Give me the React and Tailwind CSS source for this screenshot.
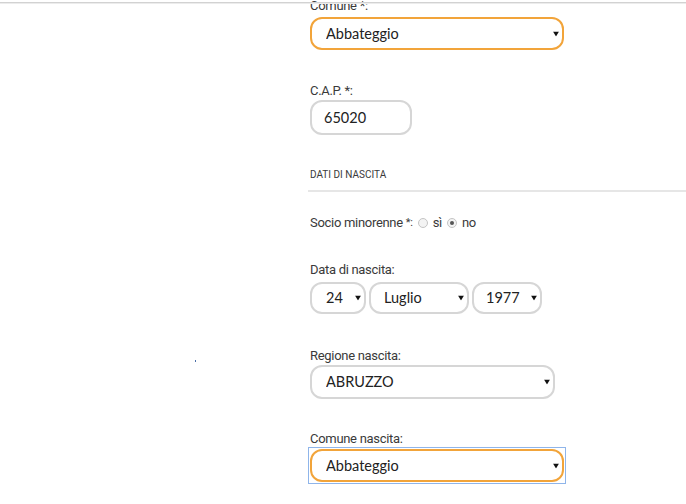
import React, { useState } from 'react';

const labelCls = "block font-['Roboto',sans-serif] text-[13px] leading-[16px] tracking-[-0.3px] text-[#3a3a3a]";
const valueFont = "font-['Lato',sans-serif] text-[14.5px] text-[#222]";

const Arrow = () => (
    <svg className="pointer-events-none absolute right-[5px] top-1/2 -translate-y-1/2" width="6" height="5" viewBox="0 0 6 5">
        <path d="M0 0h6L3 5z" fill="#111" />
    </svg>
);

const Select = ({ value, options, onChange, wrap, box }) => (
    <div className={`relative ${wrap}`}>
        <select
            value={value}
            onChange={(e) => onChange(e.target.value)}
            className={`h-full w-full appearance-none bg-white outline-none ${valueFont} ${box}`}
        >
            {options.map((o) => <option key={o}>{o}</option>)}
        </select>
        <Arrow />
    </div>
);

const App = () => {
    const [form, setForm] = useState({
        comune: 'Abbateggio',
        cap: '65020',
        minorenne: 'no',
        giorno: '24',
        mese: 'Luglio',
        anno: '1977',
        regione: 'ABRUZZO',
        comuneNascita: 'Abbateggio',
    });
    const set = (key) => (v) => setForm((f) => ({ ...f, [key]: v }));

    return (
        <div className="relative h-[504px] w-[686px] overflow-hidden bg-white">
            {/* top edge of the scrolled panel */}
            <div className="absolute left-0 right-0 top-[2px] z-10 h-[1px] bg-[#d2d2d2]" />
            <div className="absolute left-0 right-0 top-[3px] z-10 h-[1px] bg-[#ececec]" />
            <div className="absolute left-[195px] top-[360px] h-[2px] w-[1px] bg-[#4a6fa8]" />

            <div className="-mt-[2px] pl-[310px]">
                <label className={labelCls}>Comune *:</label>
                <Select
                    value={form.comune}
                    options={['Abbateggio', 'Pescara', 'Chieti']}
                    onChange={set('comune')}
                    wrap="mt-[3px] h-[33px] w-[254px]"
                    box="rounded-[12px] border-2 border-[#f2a43a] pl-[14px]"
                />

                <label className={`${labelCls} mt-[33px]`}>C.A.P. *:</label>
                <input
                    value={form.cap}
                    onChange={(e) => set('cap')(e.target.value)}
                    className={`mt-[1px] block h-[35px] w-[102px] rounded-[12px] border-2 border-[#d6d6d6] pl-[12px] outline-none ${valueFont}`}
                />

                <div className="mt-[33px] font-['Roboto',sans-serif] text-[10px] leading-[13px] text-[#3a3a3a]">DATI DI NASCITA</div>
                <div className="-ml-[2px] mt-[9px] h-[2px] bg-[#e6e6e6]" />

                <div className="mt-[23px] flex items-center font-['Roboto',sans-serif] text-[13px] leading-[16px] tracking-[-0.3px] text-[#3a3a3a]">
                    <span>Socio minorenne</span>
                    <span className="ml-[3px] text-[11px]">*:</span>
                    {[['si', 'sì'], ['no', 'no']].map(([k, t]) => (
                        <label key={k} className="ml-[5px] flex cursor-pointer items-center" onClick={() => set('minorenne')(k)}>
                            <span className="flex h-[10px] w-[10px] items-center justify-center rounded-full border border-[#c4c4c4] bg-[#f3f3f3]">
                                {form.minorenne === k && <span className="h-[4px] w-[4px] rounded-full bg-[#555]" />}
                            </span>
                            <span className="ml-[5px]">{t}</span>
                        </label>
                    ))}
                </div>

                <label className={`${labelCls} mt-[31px]`}>Data di nascita:</label>
                <div className="mt-[4px] flex gap-[3px]">
                    <Select
                        value={form.giorno}
                        options={Array.from({ length: 31 }, (_, i) => String(i + 1))}
                        onChange={set('giorno')}
                        wrap="h-[32px] w-[56px]"
                        box="rounded-[12px] border-2 border-[#d6d6d6] pl-[14px]"
                    />
                    <Select
                        value={form.mese}
                        options={['Gennaio', 'Febbraio', 'Marzo', 'Aprile', 'Maggio', 'Giugno', 'Luglio', 'Agosto', 'Settembre', 'Ottobre', 'Novembre', 'Dicembre']}
                        onChange={set('mese')}
                        wrap="h-[32px] w-[100px]"
                        box="rounded-[12px] border-2 border-[#d6d6d6] pl-[13px]"
                    />
                    <Select
                        value={form.anno}
                        options={Array.from({ length: 60 }, (_, i) => String(1950 + i))}
                        onChange={set('anno')}
                        wrap="h-[32px] w-[70px]"
                        box="rounded-[12px] border-2 border-[#d6d6d6] pl-[12px]"
                    />
                </div>

                <label className={`${labelCls} mt-[34px]`}>Regione nascita:</label>
                <Select
                    value={form.regione}
                    options={['ABRUZZO', 'BASILICATA', 'CALABRIA', 'CAMPANIA']}
                    onChange={set('regione')}
                    wrap="mt-[1px] h-[34px] w-[245px]"
                    box="rounded-[12px] border-2 border-[#d6d6d6] pl-[14px]"
                />

                <label className={`${labelCls} mt-[32px]`}>Comune nascita:</label>
                <div className="-ml-[2px] w-[258px] border border-[#8fb5ea] p-[1px]">
                    <Select
                        value={form.comuneNascita}
                        options={['Abbateggio', 'Pescara', 'Chieti']}
                        onChange={set('comuneNascita')}
                        wrap="h-[33px] w-full"
                        box="rounded-[12px] border-2 border-[#f2a43a] pl-[14px]"
                    />
                </div>
            </div>
        </div>
    );
};

export default App;
